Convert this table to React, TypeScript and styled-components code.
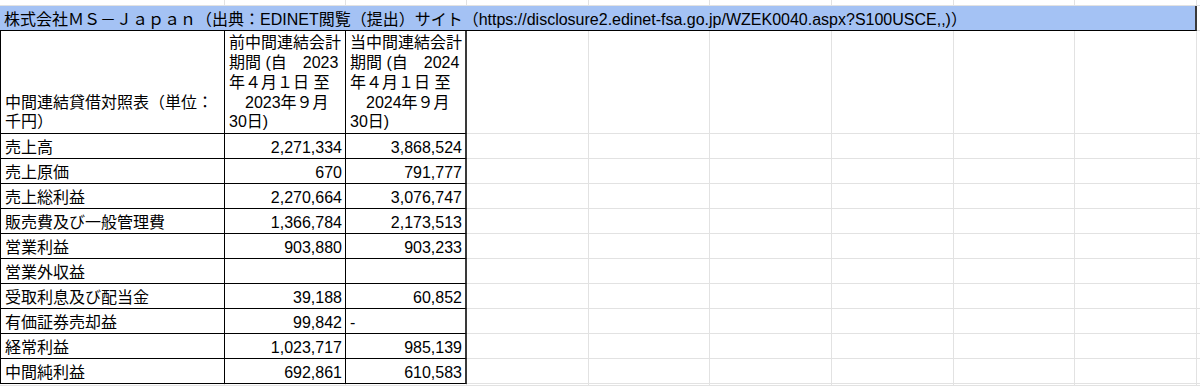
import styled, { createGlobalStyle } from 'styled-components';

const GlobalStyle = createGlobalStyle`
  html, body {
    margin: 0;
    padding: 0;
    background: #fff;
  }
  body {
    font-family: 'Liberation Sans', 'Noto Sans CJK JP', sans-serif;
    color: #000;
  }
`;

const GRID = '#e2e2e2';
const INK = '#000';
const COLS = [225, 121, 121, 122, 121, 122, 122, 121, 122];

interface ICell {
  $right?: string;
  $bottom?: string;
  $left?: string;
  $align?: 'left' | 'right';
  $wide?: boolean;
}

const Sheet = styled.div`
  display: grid;
  grid-template-columns: ${COLS.map((w) => `${w}px`).join(' ')} 1fr;
  grid-template-rows: 6px 25px 103px repeat(10, 25px) 1fr;
  width: 1200px;
  height: 386px;
  overflow: hidden;
  font-size: 16px;
`;

const Cell = styled.div<ICell>`
  box-sizing: border-box;
  min-width: 0;
  display: flex;
  align-items: flex-end;
  justify-content: ${(p) => (p.$align === 'right' ? 'flex-end' : 'flex-start')};
  padding: 0 3px 1px 4px;
  border-right: ${(p) => (p.$wide ? 2 : 1)}px solid ${(p) => p.$right || GRID};
  border-bottom: 1px solid ${(p) => p.$bottom || GRID};
  border-left: ${(p) => (p.$left ? `1px solid ${p.$left}` : 'none')};
  line-height: 19px;
  white-space: nowrap;
`;

const HeadCell = styled(Cell)`
  white-space: pre;
  line-height: 19.7px;
`;

const TitleBar = styled.div`
  grid-column: 1 / 10;
  box-sizing: border-box;
  display: flex;
  align-items: flex-end;
  padding: 0 4px 1px 4px;
  background: #a4c2f4;
  border-bottom: 1px solid ${INK};
  border-right: 2px solid #3a3a3a;
  line-height: 19px;
  white-space: nowrap;
`;

const rows = [
  ['売上高', '2,271,334', '3,868,524'],
  ['売上原価', '670', '791,777'],
  ['売上総利益', '2,270,664', '3,076,747'],
  ['販売費及び一般管理費', '1,366,784', '2,173,513'],
  ['営業利益', '903,880', '903,233'],
  ['営業外収益', '', ''],
  ['受取利息及び配当金', '39,188', '60,852'],
  ['有価証券売却益', '99,842', '-'],
  ['経常利益', '1,023,717', '985,139'],
  ['中間純利益', '692,861', '610,583'],
];

const Fillers = ({ count, prefix }: { count: number; prefix: string }) => (
  <>
    {Array.from({ length: count }, (_, i) => (
      <Cell key={`${prefix}-${i}`} />
    ))}
  </>
);

const App = () => {
  return (
    <>
      <GlobalStyle />
      <Sheet>
        <Fillers count={10} prefix="top" />

        <TitleBar>
          株式会社ＭＳ－Ｊａｐａｎ（出典：EDINET閲覧（提出）サイト（https://disclosure2.edinet-fsa.go.jp/WZEK0040.aspx?S100USCE,,)）
        </TitleBar>
        <Cell />

        <HeadCell $left={INK} $right={INK} $bottom={INK}>
          {'中間連結貸借対照表（単位：\n千円）'}
        </HeadCell>
        <HeadCell $right={INK} $bottom={INK}>
          {'前中間連結会計\n期間 (自　2023\n年４月１日 至\n　2023年９月\n30日)'}
        </HeadCell>
        <HeadCell $right="#3a3a3a" $wide $bottom={INK}>
          {'当中間連結会計\n期間 (自　2024\n年４月１日 至\n　2024年９月\n30日)'}
        </HeadCell>
        <Fillers count={7} prefix="head" />

        {rows.map(([label, prev, curr]) => (
          <>
            <Cell key={`${label}-a`} $left={INK} $right={INK} $bottom={INK}>
              {label}
            </Cell>
            <Cell key={`${label}-b`} $right={INK} $bottom={INK} $align="right">
              {prev}
            </Cell>
            <Cell
              key={`${label}-c`}
              $right="#3a3a3a"
              $wide
              $bottom={INK}
              $align={curr === '-' ? 'left' : 'right'}
            >
              {curr}
            </Cell>
            <Fillers count={7} prefix={label} />
          </>
        ))}

        <Fillers count={10} prefix="bottom" />
      </Sheet>
    </>
  );
};

export default App;
